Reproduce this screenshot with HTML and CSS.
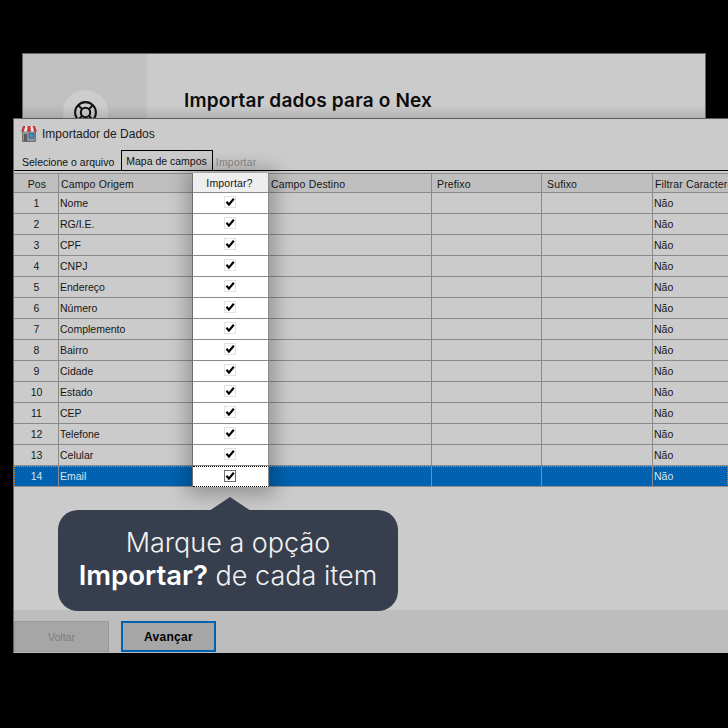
FILE: index.html
```html
<!DOCTYPE html>
<html lang="pt">
<head>
<meta charset="utf-8">
<title>Importador de Dados</title>
<link rel="stylesheet" href="styles.css">
</head>
<body>
<div class="desktop">
  <section class="backdrop">
    <div class="backdrop-side">
      <div class="help-circle">
        <svg class="help-icon" viewBox="0 0 24 24" width="25" height="25" fill="none" stroke="#111" stroke-width="2">
          <circle cx="12" cy="12" r="10"/><circle cx="12" cy="12" r="4.5"/>
          <path d="M5 5l4 4M19 5l-4 4M5 19l4-4M19 19l-4-4"/>
        </svg>
      </div>
    </div>
    <div class="backdrop-main"><h1 class="backdrop-title">Importar dados para o Nex</h1></div>
  </section>

  <section class="window">
    <header class="titlebar">
      <svg class="app-icon" viewBox="0 0 16 17" width="16" height="17">
        <rect x="1.5" y="6" width="13" height="10.5" fill="#8a97a3" stroke="#555" stroke-width=".7"/>
        <rect x="3" y="9" width="3" height="7" fill="#5d5a58"/>
        <rect x="8" y="8.5" width="5" height="4.5" fill="#3f8fd0" stroke="#35566f" stroke-width=".7"/>
        <path d="M2 1h12l1.8 5.5H.2z" fill="#c9373a"/>
        <path d="M4.5 1h2l-.5 5.5H2.8zM9.5 1h2l1.5 5.5H10z" fill="#eee"/>
      </svg>
      <span class="window-title">Importador de Dados</span>
    </header>
    <nav class="tabs">
      <span class="tab">Selecione o arquivo</span>
      <span class="tab tab-active">Mapa de campos</span>
      <span class="tab tab-disabled">Importar</span>
    </nav>
    <div class="grid">
      <div class="spot"></div>
      <div class="row head">
        <div class="c center">Pos</div><div class="c">Campo Origem</div><div class="c imp imp-head">Importar?</div><div class="c">Campo Destino</div><div class="c pad">Prefixo</div><div class="c pad">Sufixo</div><div class="c">Filtrar Caracteres</div>
      </div>
      <div class="row"><div class="c center">1</div><div class="c">Nome</div><div class="c imp"><span class="chk"><svg viewBox="0 0 10 10"><path class="tick" d="M1.5 4.8l2.4 2.8L8.8 1.8"/></svg></span></div><div class="c"></div><div class="c"></div><div class="c"></div><div class="c">Não</div></div>
      <div class="row"><div class="c center">2</div><div class="c">RG/I.E.</div><div class="c imp"><span class="chk"><svg viewBox="0 0 10 10"><path class="tick" d="M1.5 4.8l2.4 2.8L8.8 1.8"/></svg></span></div><div class="c"></div><div class="c"></div><div class="c"></div><div class="c">Não</div></div>
      <div class="row"><div class="c center">3</div><div class="c">CPF</div><div class="c imp"><span class="chk"><svg viewBox="0 0 10 10"><path class="tick" d="M1.5 4.8l2.4 2.8L8.8 1.8"/></svg></span></div><div class="c"></div><div class="c"></div><div class="c"></div><div class="c">Não</div></div>
      <div class="row"><div class="c center">4</div><div class="c">CNPJ</div><div class="c imp"><span class="chk"><svg viewBox="0 0 10 10"><path class="tick" d="M1.5 4.8l2.4 2.8L8.8 1.8"/></svg></span></div><div class="c"></div><div class="c"></div><div class="c"></div><div class="c">Não</div></div>
      <div class="row"><div class="c center">5</div><div class="c">Endereço</div><div class="c imp"><span class="chk"><svg viewBox="0 0 10 10"><path class="tick" d="M1.5 4.8l2.4 2.8L8.8 1.8"/></svg></span></div><div class="c"></div><div class="c"></div><div class="c"></div><div class="c">Não</div></div>
      <div class="row"><div class="c center">6</div><div class="c">Número</div><div class="c imp"><span class="chk"><svg viewBox="0 0 10 10"><path class="tick" d="M1.5 4.8l2.4 2.8L8.8 1.8"/></svg></span></div><div class="c"></div><div class="c"></div><div class="c"></div><div class="c">Não</div></div>
      <div class="row"><div class="c center">7</div><div class="c">Complemento</div><div class="c imp"><span class="chk"><svg viewBox="0 0 10 10"><path class="tick" d="M1.5 4.8l2.4 2.8L8.8 1.8"/></svg></span></div><div class="c"></div><div class="c"></div><div class="c"></div><div class="c">Não</div></div>
      <div class="row"><div class="c center">8</div><div class="c">Bairro</div><div class="c imp"><span class="chk"><svg viewBox="0 0 10 10"><path class="tick" d="M1.5 4.8l2.4 2.8L8.8 1.8"/></svg></span></div><div class="c"></div><div class="c"></div><div class="c"></div><div class="c">Não</div></div>
      <div class="row"><div class="c center">9</div><div class="c">Cidade</div><div class="c imp"><span class="chk"><svg viewBox="0 0 10 10"><path class="tick" d="M1.5 4.8l2.4 2.8L8.8 1.8"/></svg></span></div><div class="c"></div><div class="c"></div><div class="c"></div><div class="c">Não</div></div>
      <div class="row"><div class="c center">10</div><div class="c">Estado</div><div class="c imp"><span class="chk"><svg viewBox="0 0 10 10"><path class="tick" d="M1.5 4.8l2.4 2.8L8.8 1.8"/></svg></span></div><div class="c"></div><div class="c"></div><div class="c"></div><div class="c">Não</div></div>
      <div class="row"><div class="c center">11</div><div class="c">CEP</div><div class="c imp"><span class="chk"><svg viewBox="0 0 10 10"><path class="tick" d="M1.5 4.8l2.4 2.8L8.8 1.8"/></svg></span></div><div class="c"></div><div class="c"></div><div class="c"></div><div class="c">Não</div></div>
      <div class="row"><div class="c center">12</div><div class="c">Telefone</div><div class="c imp"><span class="chk"><svg viewBox="0 0 10 10"><path class="tick" d="M1.5 4.8l2.4 2.8L8.8 1.8"/></svg></span></div><div class="c"></div><div class="c"></div><div class="c"></div><div class="c">Não</div></div>
      <div class="row"><div class="c center">13</div><div class="c">Celular</div><div class="c imp"><span class="chk"><svg viewBox="0 0 10 10"><path class="tick" d="M1.5 4.8l2.4 2.8L8.8 1.8"/></svg></span></div><div class="c"></div><div class="c"></div><div class="c"></div><div class="c">Não</div></div>
      <div class="row selected"><div class="c center">14</div><div class="c">Email</div><div class="c imp imp-focus"><span class="chk chk-focus"><svg viewBox="0 0 10 10"><path class="tick" d="M1.5 4.8l2.4 2.8L8.8 1.8"/></svg></span></div><div class="c"></div><div class="c"></div><div class="c"></div><div class="c">Não</div></div>
    </div>
    <div class="filler"></div>
    <footer class="actions">
      <button class="btn btn-disabled" disabled>Voltar</button>
      <button class="btn btn-primary">Avançar</button>
    </footer>
    <aside class="tip">
      <span class="tip-arrow"></span>
      <p class="tip-text">Marque a opção<br><strong>Importar?</strong> de cada item</p>
    </aside>
  </section>
</div>
</body>
</html>
```
FILE: styles.css
```css
* { box-sizing: border-box; }
html, body { margin: 0; padding: 0; background: #000; }
.desktop { position: relative; width: 728px; height: 728px; overflow: hidden; background: #000; }

.backdrop { position: absolute; left: 22px; top: 53px; width: 684px; height: 66px; display: flex; border: 1px solid #666; border-bottom: 0; background: #cbcbcb; }
.backdrop::after { content: ""; position: absolute; left: 0; right: 0; bottom: 0; height: 14px; background: linear-gradient(to bottom, rgba(0,0,0,0), rgba(0,0,0,.13)); }
.backdrop-side { width: 124px; background: #c1c1c1; display: flex; justify-content: center; padding-top: 36px; overflow: hidden; }
.help-circle { width: 45px; height: 45px; border-radius: 50%; background: #cdcdcd; display: flex; align-items: center; justify-content: center; flex: none; }
.backdrop-main { flex: 1; padding: 36px 0 0 37px; }
.backdrop-title { margin: 0; font: 600 19px/22px Inter, sans-serif; color: #0c0c0c; letter-spacing: .18px; }

.window { position: absolute; left: 13px; top: 118px; width: 715px; height: 535px; display: flex; flex-direction: column; background: #cbcbcb; border-top: 1px solid #5c5c5c; border-left: 1px solid #666; font: 10.5px/14px "Liberation Sans", sans-serif; color: #111; }
.titlebar { height: 32px; flex: none; display: flex; align-items: flex-start; gap: 5px; padding: 6px 0 0 7px; }
.window-title { font-size: 12px; line-height: 18px; color: #1a1a1a; }
.tabs { height: 20px; flex: none; display: flex; align-items: flex-end; padding-left: 4px; border-bottom: 1px solid #000; }
.tab { display: block; padding: 2px 4px 0; height: 19px; line-height: 19px; color: #111; }
.tab-active { height: 20px; border: 1px solid #000; border-bottom: 0; padding: 1px 5px 0 4px; background: #cbcbcb; margin-left: 3px; }
.tab-disabled { color: #8a8a8a; padding-left: 3px; letter-spacing: .2px; }

.grid { position: relative; flex: none; margin-top: 2px; border-top: 1px solid #8a8a8a; }
.spot { position: absolute; left: 179px; top: -1px; width: 76px; bottom: 0; box-shadow: 0 2px 18px 6px rgba(0,0,0,.27); z-index: 1; }
.row { display: grid; grid-template-columns: 45px 134px 76px 163px 110px 111px 1fr; height: 21px; border-bottom: 1px solid #8a8a8a; color: #161616; }
.row.head { height: 19px; background: #bfbfbf; letter-spacing: .15px; }
.c { padding-left: 1px; border-right: 1px solid #8a8a8a; line-height: 20px; white-space: nowrap; overflow: hidden; }
.head .c { line-height: 20px; padding-left: 2px; }
.head .pad { padding-left: 5px; }
.c:last-child { border-right: 0; }
.center { text-align: center; }
.imp { position: relative; z-index: 2; background: #fff; display: flex; justify-content: center; align-items: center; padding: 0 1px 0 0; margin-bottom: -1px; border-bottom: 1px solid #8a8a8a; border-right: 1px solid #8a8a8a; }
.head .imp-head { background: #eeeeee; padding: 1px 2px 0 0; line-height: 18px; margin-top: -1px; }
.chk { display: block; width: 12px; height: 12px; margin-top: -2px; background: #fff; border: 1px solid #e2e2e2; }
.chk svg { display: block; width: 10px; height: 10px; }
.tick { fill: none; stroke: #000; stroke-width: 2.2; }
.chk-focus { border-color: #6e6e6e; }
.selected { background: #0062b0; color: #d8e4ef; outline: 1px dotted #c08a4a; outline-offset: -1px; }
.imp-focus { border-top: 1px dotted #000; border-bottom: 1px dotted #000; }

.filler { flex: 1; }
.actions { height: 43px; flex: none; background: #bdbdbd; display: flex; gap: 12px; padding-top: 11px; }
.btn { width: 95px; height: 31px; font: 10.5px/14px "Liberation Sans", sans-serif; border: 0; }
.btn-disabled { background: #a6a6a6; border: 1px solid #9a9a9a; color: #7c7c7c; }
.btn-primary { background: #a6a6a6; border: 2px solid #0062b0; color: #000; font-weight: 700; font-size: 12px; letter-spacing: .3px; }

.tip { position: absolute; left: 44px; top: 391px; width: 340px; height: 101px; background: #373f4e; border-radius: 20px; display: flex; align-items: center; justify-content: center; z-index: 3; padding-bottom: 4px; }
.tip-arrow { position: absolute; left: 151px; top: -13px; width: 42px; height: 14px; background: #373f4e; clip-path: polygon(50% 0, 100% 100%, 0 100%); }
.tip-text { margin: 0; text-align: center; color: #f2f2f2; font: 300 27px/33px Inter, sans-serif; }
.tip-text strong { font-weight: 600; font-size: 27.5px; color: #fff; }
```
